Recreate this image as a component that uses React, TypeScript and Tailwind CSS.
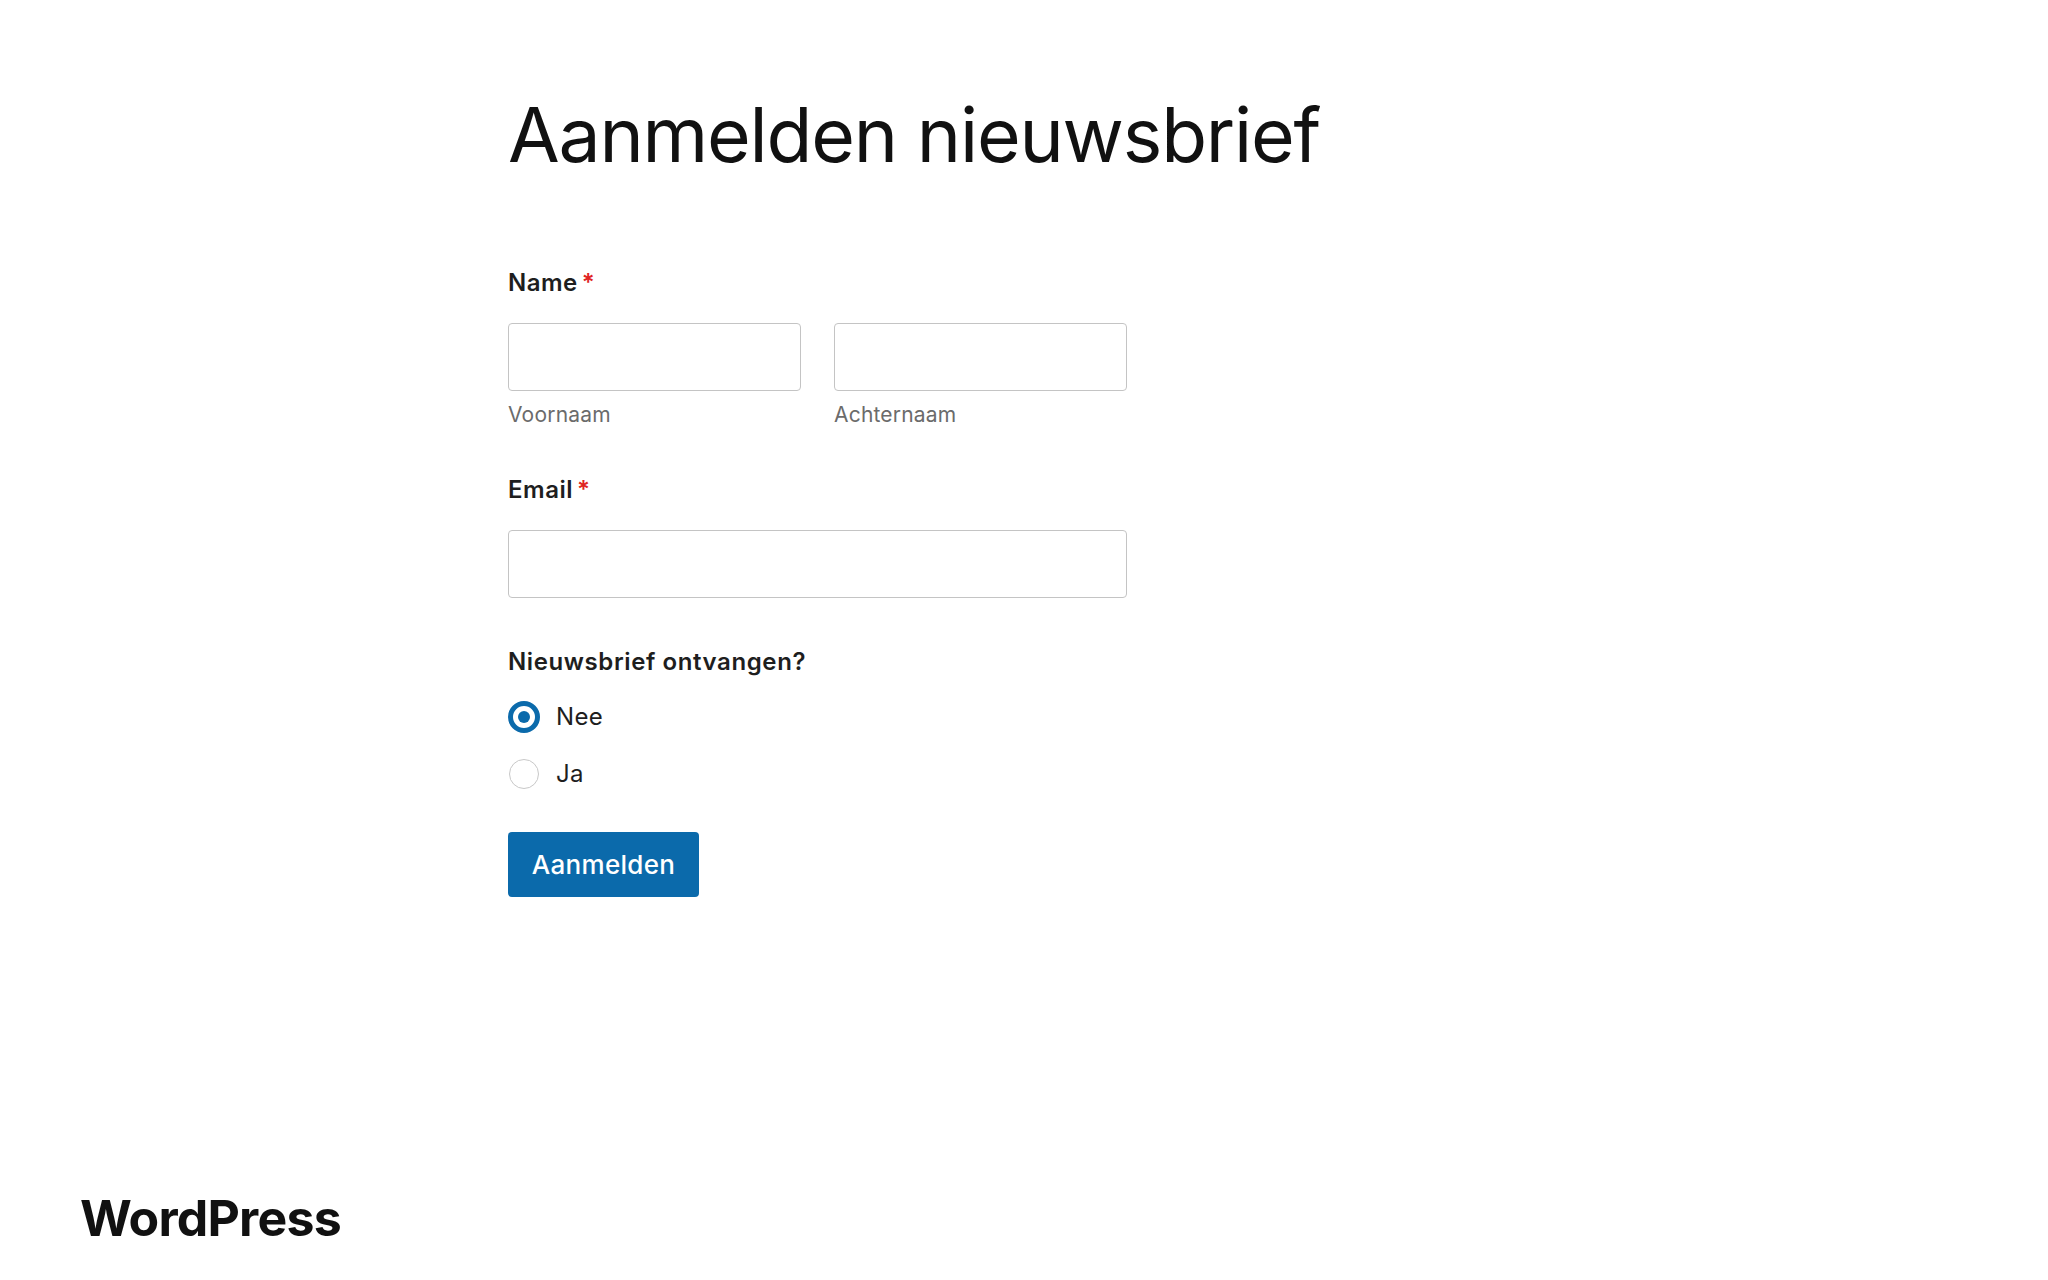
import React from "react";

export default function App() {
  return (
    <div
      className="min-h-screen bg-white flex flex-col text-[#111111]"
      style={{ fontFamily: "Inter, 'Noto Sans', sans-serif" }}
    >
      <main className="pl-[508px] pt-[89px]">
        <h1 className="text-[75px] leading-[92px] font-normal text-[#111111] tracking-[-1.2px]">
          Aanmelden nieuwsbrief
        </h1>

        <form className="w-[619px] mt-[88px]" onSubmit={(e) => e.preventDefault()}>
          <div className="text-[24px] leading-[28px] font-semibold text-[#1e1e1e] tracking-[0.5px]">
            Name<span className="text-[#e02424] ml-[4px]">*</span>
          </div>
          <div className="grid grid-cols-2 gap-[33px] mt-[26px]">
            <div>
              <input
                type="text"
                className="block w-full h-[68px] rounded-[4px] border-[1.5px] border-[#c4c4c4] bg-white"
              />
              <div className="mt-[10px] text-[21px] leading-[28px] text-[#6b6b6b] tracking-[0.2px]">Voornaam</div>
            </div>
            <div>
              <input
                type="text"
                className="block w-full h-[68px] rounded-[4px] border-[1.5px] border-[#c4c4c4] bg-white"
              />
              <div className="mt-[10px] text-[21px] leading-[28px] text-[#6b6b6b] tracking-[0.2px]">Achternaam</div>
            </div>
          </div>

          <div className="mt-[47px] text-[24px] leading-[28px] font-semibold text-[#1e1e1e] tracking-[0.5px]">
            Email<span className="text-[#e02424] ml-[4px]">*</span>
          </div>
          <input
            type="email"
            className="block mt-[26px] w-full h-[68px] rounded-[4px] border-[1.5px] border-[#c4c4c4] bg-white"
          />

          <div className="mt-[49px] text-[24px] leading-[30px] font-semibold text-[#1e1e1e] tracking-[0.6px]">
            Nieuwsbrief ontvangen?
          </div>

          <div className="mt-[24px] flex flex-col gap-[25px]">
            <label className="flex items-center h-[32px]">
              <span className="w-[32px] h-[32px] rounded-full border-[5px] border-[#0b6aab] flex items-center justify-center">
                <span className="w-[12px] h-[12px] rounded-full bg-[#0b6aab]" />
              </span>
              <span className="ml-[16px] text-[24px] leading-[30px] text-[#1e1e1e] tracking-[0.3px]">Nee</span>
            </label>
            <label className="flex items-center h-[32px]">
              <span className="ml-[1px] w-[30px] h-[30px] rounded-full border-[1.5px] border-[#c8c8c8]" />
              <span className="ml-[17px] text-[24px] leading-[30px] text-[#1e1e1e] tracking-[0.3px]">Ja</span>
            </label>
          </div>

          <button
            type="submit"
            className="mt-[42px] w-[191px] h-[65px] rounded-[4px] bg-[#0b6aab] text-white text-[26px] font-medium tracking-[0.3px] flex items-center justify-center"
          >
            Aanmelden
          </button>
        </form>
      </main>

      <footer className="mt-auto pl-[80px] pb-[32px]">
        <div className="text-[50px] leading-[60px] font-bold text-[#111111] tracking-[-0.8px]">WordPress</div>
      </footer>
    </div>
  );
}
